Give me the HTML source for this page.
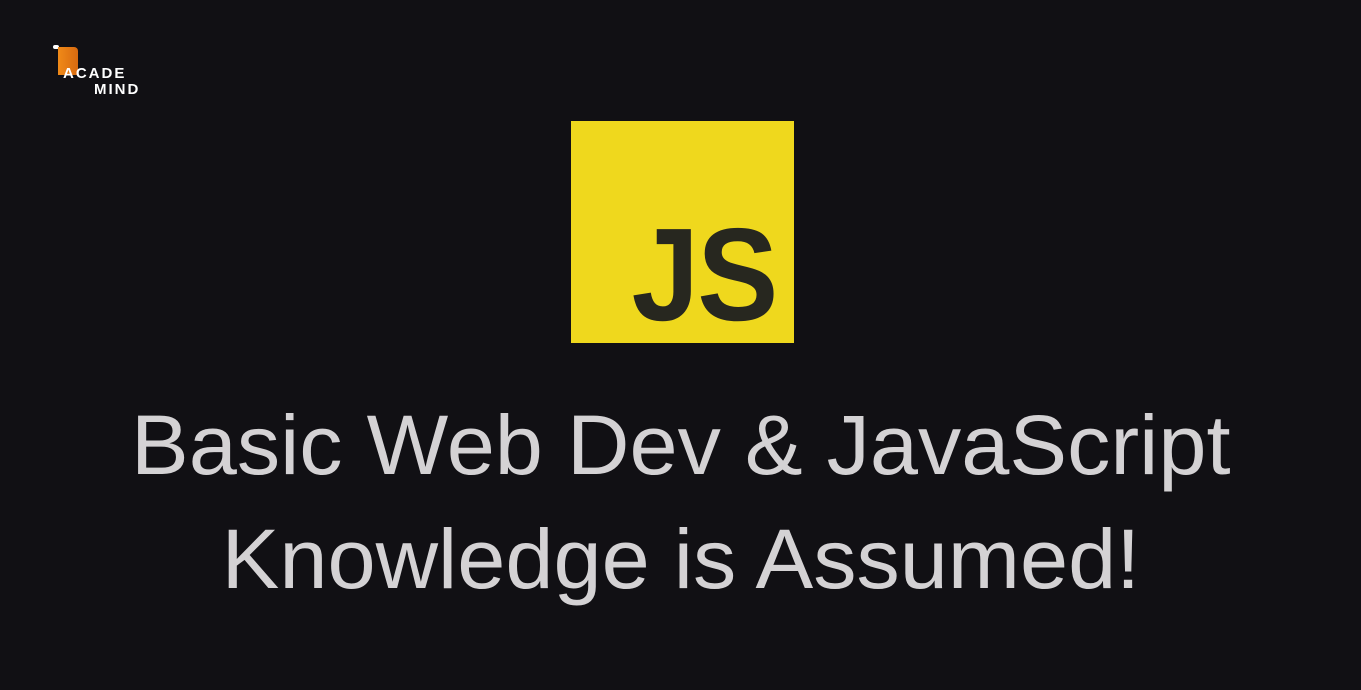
<!DOCTYPE html>
<html><head><style>
body{margin:0;width:1361px;height:690px;background:#111014;overflow:hidden;position:relative;font-family:"Liberation Sans",sans-serif}
.js{position:absolute;left:571px;top:121px;width:223px;height:222px;background:#efd81d}
.js span{position:absolute;right:18px;bottom:-7px;font-size:132px;font-weight:bold;color:#27271f;letter-spacing:-2px;display:inline-block;transform:scaleX(0.92);transform-origin:right bottom}
.l{position:absolute;left:0;width:1361px;text-align:center;color:#d4d2d4;font-size:84px;line-height:1}
.l span{display:inline-block;transform:scaleX(1.03)}
.logo{position:absolute;left:53px;top:45px}
</style></head><body>
<div class="logo">
<div style="position:absolute;left:0;top:0;width:6px;height:4px;background:#fff;border-radius:2px"></div>
<div style="position:absolute;left:5px;top:2px;width:20px;height:28px;background:linear-gradient(90deg,#f08a18,#d86a10);border-radius:0 4px 0 0"></div>
<div style="position:absolute;left:10px;top:20px;font-size:15px;font-weight:bold;color:#fff;letter-spacing:2px">ACADE</div>
<div style="position:absolute;left:41px;top:36px;font-size:15px;font-weight:bold;color:#fff;letter-spacing:2px">MIND</div>
</div>
<div class="js"><span>JS</span></div>
<div class="l" style="top:403px"><span>Basic Web Dev &amp; JavaScript</span></div>
<div class="l" style="top:517px"><span>Knowledge is Assumed!</span></div>
</body></html>
